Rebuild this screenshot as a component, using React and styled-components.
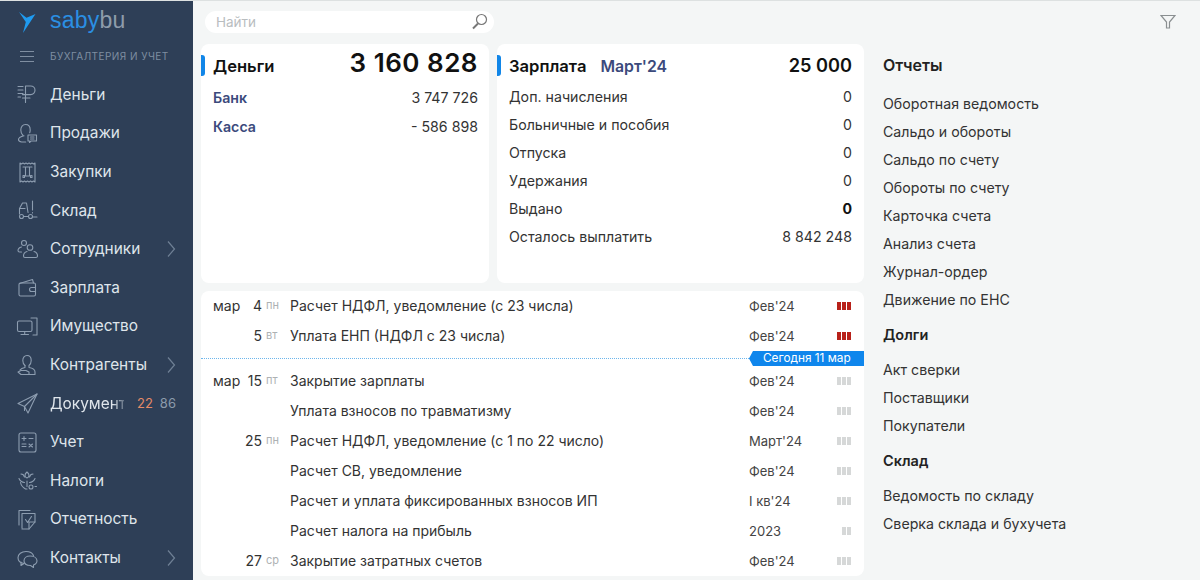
import React from "react";
import styled, { createGlobalStyle } from "styled-components";

const Global = createGlobalStyle`
  html, body {
    margin: 0;
    height: 100%;
    overflow: hidden;
  }
  body {
    font-family: Inter, "Liberation Sans", sans-serif;
    background: #f4f6f6;
  }
`;

const Page = styled.div`
  display: flex;
  width: 1200px;
  height: 580px;
  overflow: hidden;
  border-top: 1px solid #dde1e1;
  box-sizing: border-box;
`;

const Sidebar = styled.aside`
  width: 193px;
  flex: none;
  background: #2e3f57;
  display: flex;
  flex-direction: column;
`;

const LogoRow = styled.div`
  height: 41px;
  display: flex;
  align-items: center;
  padding-left: 13px;
  gap: 13px;
`;

const LogoText = styled.div`
  font-family: "Liberation Sans", sans-serif;
  font-size: 23px;
  letter-spacing: 0.2px;
  color: #8e9cab;
  margin-top: -2px;
  span {
    color: #2b8fe3;
  }
`;

const SectionRow = styled.div`
  height: 26px;
  margin-top: 1px;
  display: flex;
  align-items: center;
  padding-left: 20px;
  gap: 16px;
  font-size: 10px;
  letter-spacing: 0.45px;
  color: #7f8ea1;
`;

const Burger = styled.div`
  width: 14px;
  height: 9px;
  border-top: 1px solid #7f8ea1;
  border-bottom: 1px solid #7f8ea1;
  position: relative;
  &::after {
    content: "";
    position: absolute;
    left: 0;
    right: 0;
    top: 4px;
    border-top: 1px solid #7f8ea1;
  }
`;

const Nav = styled.nav`
  display: grid;
  grid-auto-rows: 38.6px;
  margin-top: 6.1px;
`;

const NavItem = styled.div`
  display: flex;
  align-items: center;
  padding: 0 16px;
  color: #dfe5eb;
  font-size: 15.4px;
  position: relative;
`;

const NavIcon = styled.svg`
  width: 22px;
  height: 22px;
  flex: none;
  margin-right: 12px;
  fill: none;
  stroke: #8d9db0;
  stroke-width: 1.1;
  stroke-linecap: round;
  stroke-linejoin: round;
`;

const NavLabel = styled.span`
  flex: 1;
  white-space: nowrap;
  ${(p) =>
    p.$fade &&
    `
    flex: none;
    width: 74px;
    -webkit-mask-image: linear-gradient(90deg, #000 84%, rgba(0, 0, 0, 0.3) 100%);
    mask-image: linear-gradient(90deg, #000 84%, rgba(0, 0, 0, 0.3) 100%);
  `}
`;

const Chevron = styled.svg`
  width: 10px;
  height: 18px;
  flex: none;
  margin-right: 1px;
  fill: none;
  stroke: #6f8095;
  stroke-width: 1.2;
`;

const Counters = styled.div`
  margin-left: 13px;
  display: flex;
  gap: 7px;
  font-size: 13px;
  color: #8c9bab;
  b {
    font-weight: 400;
    color: #e58a67;
  }
`;

const Main = styled.main`
  flex: 1;
  display: flex;
  flex-direction: column;
  padding: 0 0 0 8px;
  min-width: 0;
`;

const TopBar = styled.div`
  height: 43px;
  flex: none;
  box-sizing: border-box;
  display: flex;
  align-items: center;
  justify-content: space-between;
  padding: 0 24px 2px 4px;
`;

const Search = styled.div`
  width: 289px;
  height: 22px;
  background: #fff;
  border-radius: 11px;
  display: flex;
  align-items: center;
  justify-content: space-between;
  box-sizing: border-box;
  padding: 0 6px 0 11px;
  font-size: 13.5px;
  color: #b9bdbf;
`;

const Content = styled.div`
  display: flex;
  flex: 1;
  min-height: 0;
`;

const Left = styled.div`
  width: 663px;
  flex: none;
  display: flex;
  flex-direction: column;
  gap: 8px;
`;

const Cards = styled.div`
  display: flex;
  gap: 8px;
  height: 239px;
  flex: none;
`;

const Card = styled.section`
  background: #fff;
  border-radius: 8px;
  position: relative;
  box-sizing: border-box;
  width: ${(p) => p.$width}px;
  padding: 0 ${(p) => p.$right}px 0 12px;
  &::before {
    content: "";
    position: absolute;
    left: 0;
    top: 11px;
    width: 4px;
    height: 21px;
    background: #1186e8;
    border-radius: 0 3px 3px 0;
  }
`;

const CardHead = styled.div`
  height: 43px;
  display: flex;
  align-items: center;
  justify-content: space-between;
`;

const CardTitle = styled.div`
  font-size: 16.6px;
  font-weight: 600;
  color: #111;
  margin-top: 1px;
  span {
    color: #3b4a7c;
    margin-left: 14px;
    font-size: 15.8px;
  }
`;

const BigSum = styled.div`
  font-size: ${(p) => (p.$large ? 26 : 18.2)}px;
  font-weight: 600;
  letter-spacing: ${(p) => (p.$large ? 0.5 : 0)}px;
  color: #111;
  margin-top: ${(p) => (p.$large ? -7 : -1)}px;
`;

const MoneyRow = styled.div`
  height: 29px;
  display: flex;
  align-items: center;
  justify-content: space-between;
  font-size: 14.2px;
  color: #333;
  b {
    font-weight: 600;
    color: #3b4a7c;
  }
`;

const MoneyRows = styled.div`
  margin-top: -4px;
`;

const SalaryRows = styled.div`
  margin-top: -5px;
`;

const SalaryRow = styled.div`
  height: 28px;
  display: flex;
  align-items: center;
  justify-content: space-between;
  font-size: 14.2px;
  color: #333;
  b {
    font-weight: 700;
    color: #111;
  }
`;

const Tasks = styled.section`
  background: #fff;
  border-radius: 8px;
  height: 285px;
  flex: none;
`;

const TaskRow = styled.div`
  height: 30px;
  box-sizing: border-box;
  display: grid;
  grid-template-columns: 28px 21px 28px 459px 1fr;
  align-items: center;
  padding: 0 13px 2px 12px;
  font-size: 14px;
  color: #333;
  white-space: nowrap;
`;

const Day = styled.span`
  text-align: right;
`;

const Weekday = styled.span`
  font-size: 11px;
  color: #adb1b3;
  padding-left: 4px;
`;

const Period = styled.div`
  display: flex;
  justify-content: space-between;
  align-items: center;
  font-size: 13px;
  color: #444;
  margin-top: 2px;
`;

const Bars = styled.div`
  display: flex;
  gap: 1px;
`;

const Bar = styled.i`
  width: 4px;
  height: 8px;
  background: ${(p) => (p.$red ? "#b8211a" : "#d6d8d8")};
`;

const TodayRow = styled.div`
  height: 15px;
  display: flex;
  align-items: center;
`;

const TodayLine = styled.div`
  flex: 1;
  border-top: 1px dotted #6db6ec;
`;

const TodayBadge = styled.div`
  width: 115px;
  height: 15px;
  flex: none;
  background: #0f86ec;
  color: #fff;
  font-size: 11.8px;
  line-height: 15px;
  box-sizing: border-box;
  padding-left: 14px;
  clip-path: polygon(4px 0, 100% 0, 100% 100%, 4px 100%, 0 50%);
`;

const Reports = styled.aside`
  flex: 1;
  padding: 7px 0 0 19px;
`;

const ReportTitle = styled.div`
  font-size: ${(p) => (p.$first ? 16 : 14.5)}px;
  font-weight: 600;
  color: #222;
  height: 28px;
  display: flex;
  align-items: center;
  margin-top: ${(p) => (p.$first ? 0 : 7)}px;
  margin-bottom: ${(p) => (p.$first ? 10 : 7)}px;
`;

const ReportLink = styled.div`
  height: 28px;
  display: flex;
  align-items: center;
  font-size: 14.2px;
  color: #333;
`;

const icons = {
  money: (
    <>
      <path d="M9.5 19.5V3h5.2a4.3 4.3 0 0 1 0 8.6H6.5M6.5 15H14M2 3.5h5M2 7h5M2 10.5h5M2 14h2.5" />
    </>
  ),
  sales: (
    <>
      <path d="M7 13.5c-1.5-1.5-2.2-3.3-2.2-5.6C4.800 4.800 6.600 2.500 9.500 2.500s4.700 2.300 4.700 5.400c0 1-.2 2-.5 2.800" />
      <path d="M8 13.800c-3 .7-5.500 1.800-5.500 3.800 0 1.500 1.200 2.300 3.200 2.400h4" />
      <path d="M12 13h8.500v6H15l-1.500 1.500V19H12z" />
      <path d="M14.500 15h3.500M14.500 17h3.500" />
    </>
  ),
  buy: (
    <>
      <path d="M4 2l1.500 1 1.500-1 1.500 1 1.500-1 1.500 1 1.500-1 1.500 1 1.500-1 1.500 1L19 2v19l-1.500-1-1.500 1-1.500-1-1.500 1-1.500-1-1.500 1-1.500-1-1.500 1-1.500-1L4 21z" />
      <path d="M7 6h9M9.500 6v9h4V6M7 14.500h1.500v2H7zM14.500 14.500H16v2h-1.500z" />
    </>
  ),
  stock: (
    <>
      <path d="M3.500 15V9.500L6.500 4H10.500L12 13.500" />
      <path d="M3.500 9.500H9" />
      <circle cx="5.500" cy="17.500" r="2" />
      <circle cx="14.500" cy="17.500" r="2" />
      <path d="M7.500 17.500h5M16.500 18H21M16.500 2v9M16.500 13.500v.5" />
    </>
  ),
  staff: (
    <>
      <circle cx="8" cy="5" r="2.500" />
      <circle cx="14" cy="9.500" r="2.800" />
      <path d="M5.500 9c-2 .5-3.500 1.500-3.500 3.500 0 1 .5 1.500 1.500 1.500h2" />
      <path d="M11 13.500c-2 .5-3.500 2-3.500 4.500 0 1 .6 1.500 1.500 1.500h11c1 0 1.500-.5 1.500-1.500 0-2.500-1.500-4-3.500-4.500" />
    </>
  ),
  wallet: (
    <>
      <path d="M3 8.500c0-1 .7-1.500 1.500-1.500H18c1 0 1.500.7 1.500 1.500v10c0 1-.6 1.500-1.500 1.500H4.500C3.600 20 3 19.400 3 18.500z" />
      <path d="M3.500 7.500l13-4 1 3.500M19.500 11.500H15.500a2 2 0 0 0 0 4h4" />
    </>
  ),
  property: (
    <>
      <rect x="1.500" y="6" width="14.500" height="10.500" rx="1.500" />
      <path d="M8.700 16.500v3M5 19.500h7.500M15 3h6v17h-4" />
    </>
  ),
  partners: (
    <>
      <path d="M9 11.500c-1.500-1.200-2.200-3-2.200-5C6.800 3.500 8.600 1.500 11 1.500s4.200 2 4.200 5c0 2-.7 3.800-2.200 5v2c2.800.5 6 1.500 6 4.500v2.500H9" />
      <path d="M9 11.500v2c-2 .4-4 1-5 2.500" />
      <path d="M2 18l3-1.500h5l3 1.500v2.500H5z" />
    </>
  ),
  send: (
    <>
      <path d="M21 2L2 11.500l6.500 3L12 21z" />
      <path d="M21 2L8.500 14.500v4" />
    </>
  ),
  account: (
    <>
      <rect x="3" y="2" width="17" height="19" rx="2" />
      <path d="M6 7.500h4M8 5.500v4M13 7.500h4M6 13h4M6 15.500h4M13 13l3.500 3M16.500 13L13 16" />
    </>
  ),
  tax: (
    <>
      <path d="M11 3c1 1 2 1.500 2 3.500 0 1.300-.8 2-2 2.500-1.200-.5-2-1.200-2-2.500C9 4.500 10 4 11 3z" />
      <path d="M5 5c1.500 0 3 1 3.500 3M17 5c-1.500 0-3 1-3.500 3M3 9.500c1 2.500 3 3.800 5.500 4M19 9.500c-1 2.500-3 3.800-5.500 4" />
      <path d="M4.500 13.500c.5 2.500 2.500 5 5 6.500h1.500M11 12v5.500" />
      <circle cx="15" cy="18" r="2" />
      <path d="M19 17.500h1.500" />
    </>
  ),
  report: (
    <>
      <path d="M3 17V2.500h11" />
      <path d="M6 20V5.500h13V14l-6 7H6" />
      <path d="M9.500 11.500l2 3 4-6M19 14h-6v7" />
    </>
  ),
  contacts: (
    <>
      <path d="M8 16.500c-3.500-.5-6-2.700-6-5.700C2 7 5.500 4.500 10 4.500c3.500 0 6.500 1.500 7.500 4" />
      <path d="M5 15v3.500l3-2" />
      <path d="M14 9c4 0 7 2 7 4.800 0 2-1.500 3.500-3.500 4.200v2.500L14.500 18.500C10.500 18.500 8 16.500 8 13.800 8 11 10.500 9 14 9z" />
    </>
  ),
};

const navItems = [
  { label: "Деньги", icon: "money" },
  { label: "Продажи", icon: "sales" },
  { label: "Закупки", icon: "buy" },
  { label: "Склад", icon: "stock" },
  { label: "Сотрудники", icon: "staff", more: true },
  { label: "Зарплата", icon: "wallet" },
  { label: "Имущество", icon: "property" },
  { label: "Контрагенты", icon: "partners", more: true },
  { label: "Документ", icon: "send", counters: true },
  { label: "Учет", icon: "account" },
  { label: "Налоги", icon: "tax" },
  { label: "Отчетность", icon: "report" },
  { label: "Контакты", icon: "contacts", more: true },
];

const salary = [
  ["Доп. начисления", "0"],
  ["Больничные и пособия", "0"],
  ["Отпуска", "0"],
  ["Удержания", "0"],
  ["Выдано", <b>0</b>],
  ["Осталось выплатить", "8 842 248"],
];

const tasksBefore = [
  { month: "мар", day: "4", wd: "пн", title: "Расчет НДФЛ, уведомление (с 23 числа)", period: "Фев'24", bars: 3, red: true },
  { day: "5", wd: "вт", title: "Уплата ЕНП (НДФЛ с 23 числа)", period: "Фев'24", bars: 3, red: true },
];

const tasksAfter = [
  { month: "мар", day: "15", wd: "пт", title: "Закрытие зарплаты", period: "Фев'24", bars: 3 },
  { title: "Уплата взносов по травматизму", period: "Фев'24", bars: 3 },
  { day: "25", wd: "пн", title: "Расчет НДФЛ, уведомление (с 1 по 22 число)", period: "Март'24", bars: 3 },
  { title: "Расчет СВ, уведомление", period: "Фев'24", bars: 3 },
  { title: "Расчет и уплата фиксированных взносов ИП", period: "I кв'24", bars: 3 },
  { title: "Расчет налога на прибыль", period: "2023", bars: 2 },
  { day: "27", wd: "ср", title: "Закрытие затратных счетов", period: "Фев'24", bars: 3 },
];

const reportGroups = [
  {
    title: "Отчеты",
    links: ["Оборотная ведомость", "Сальдо и обороты", "Сальдо по счету", "Обороты по счету", "Карточка счета", "Анализ счета", "Журнал-ордер", "Движение по ЕНС"],
  },
  { title: "Долги", links: ["Акт сверки", "Поставщики", "Покупатели"] },
  { title: "Склад", links: ["Ведомость по складу", "Сверка склада и бухучета"] },
];

const Task = ({ task }) => (
  <TaskRow>
    <span>{task.month}</span>
    <Day>{task.day}</Day>
    <Weekday>{task.wd}</Weekday>
    <span>{task.title}</span>
    <Period>
      {task.period}
      <Bars>
        {Array.from({ length: task.bars }).map((_, i) => (
          <Bar key={i} $red={task.red} />
        ))}
      </Bars>
    </Period>
  </TaskRow>
);

const App = () => {
  return (
    <Page>
      <Global />
      <Sidebar>
        <LogoRow>
          <svg width="24" height="26" viewBox="0 0 24 26">
            <path d="M6 3l7.500 5.800L22.500 5 10 24l2.800-11z" fill="#1f9bf0" />
          </svg>
          <LogoText>
            <span>saby</span>bu
          </LogoText>
        </LogoRow>
        <SectionRow>
          <Burger />
          БУХГАЛТЕРИЯ И УЧЕТ
        </SectionRow>
        <Nav>
          {navItems.map((item) => (
            <NavItem key={item.label}>
              <NavIcon viewBox="0 0 22 22">{icons[item.icon]}</NavIcon>
              <NavLabel $fade={item.counters}>{item.label}</NavLabel>
              {item.counters && (
                <Counters>
                  <b>22</b>
                  86
                </Counters>
              )}
              {item.more && (
                <Chevron viewBox="0 0 10 18">
                  <path d="M2 1.500L8.500 9 2 16.500" />
                </Chevron>
              )}
            </NavItem>
          ))}
        </Nav>
      </Sidebar>
      <Main>
        <TopBar>
          <Search>
            Найти
            <svg width="17" height="17" viewBox="0 0 17 17" fill="none" stroke="#777" strokeWidth="1.2">
              <circle cx="10.500" cy="6.500" r="5" />
              <path d="M7 10.500L2 15.500" strokeWidth="2" />
            </svg>
          </Search>
          <svg width="16" height="15" viewBox="0 0 16 15" fill="none" stroke="#8a8f91" strokeWidth="1.2">
            <path d="M1 1.500h14L9.500 8v6H6.500V8z" />
          </svg>
        </TopBar>
        <Content>
          <Left>
            <Cards>
              <Card $width={288} $right={11}>
                <CardHead>
                  <CardTitle>Деньги</CardTitle>
                  <BigSum $large>3 160 828</BigSum>
                </CardHead>
                <MoneyRows>
                  <MoneyRow>
                    <b>Банк</b>3 747 726
                  </MoneyRow>
                  <MoneyRow>
                    <b>Касса</b>- 586 898
                  </MoneyRow>
                </MoneyRows>
              </Card>
              <Card $width={367} $right={12}>
                <CardHead>
                  <CardTitle>
                    Зарплата<span>Март'24</span>
                  </CardTitle>
                  <BigSum>25 000</BigSum>
                </CardHead>
                <SalaryRows>
                  {salary.map(([name, value]) => (
                    <SalaryRow key={name}>
                      <span>{name}</span>
                      <span>{value}</span>
                    </SalaryRow>
                  ))}
                </SalaryRows>
              </Card>
            </Cards>
            <Tasks>
              {tasksBefore.map((task) => (
                <Task key={task.title} task={task} />
              ))}
              <TodayRow>
                <TodayLine />
                <TodayBadge>Сегодня 11 мар</TodayBadge>
              </TodayRow>
              {tasksAfter.map((task) => (
                <Task key={task.title} task={task} />
              ))}
            </Tasks>
          </Left>
          <Reports>
            {reportGroups.map((group, i) => (
              <div key={group.title}>
                <ReportTitle $first={i === 0}>{group.title}</ReportTitle>
                {group.links.map((link) => (
                  <ReportLink key={link}>{link}</ReportLink>
                ))}
              </div>
            ))}
          </Reports>
        </Content>
      </Main>
    </Page>
  );
};

export default App;
